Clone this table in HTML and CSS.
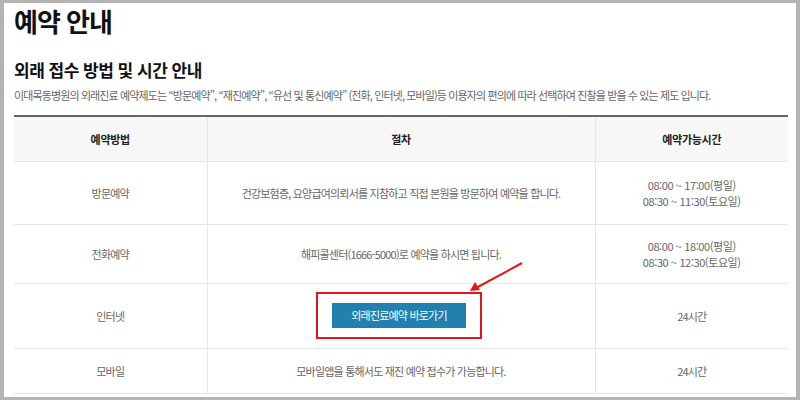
FILE: index.html
```html
<!DOCTYPE html>
<html lang="ko">
<head>
<meta charset="utf-8">
<link rel="stylesheet" href="styles.css">
</head>
<body>
<div class="frame">
  <div class="page">
    <h1 class="title">예약 안내</h1>
    <h2 class="subtitle">외래 접수 방법 및 시간 안내</h2>
    <p class="desc">이대목동병원의 외래진료 예약제도는 “방문예약”, “재진예약”, “유선 및 통신예약” (전화, 인터넷, 모바일)등 이용자의 편의에 따라 선택하여 진찰을 받을 수 있는 제도 입니다.</p>
    <table class="rtable">
      <colgroup>
        <col class="c1"><col class="c2"><col class="c3">
      </colgroup>
      <thead>
        <tr class="head"><th>예약방법</th><th>절차</th><th>예약가능시간</th></tr>
      </thead>
      <tbody>
        <tr class="r1">
          <td>방문예약</td>
          <td>건강보험증, 요양급여의뢰서를 지참하고 직접 본원을 방문하여 예약을 합니다.</td>
          <td class="time">08:00 ~ 17:00(평일)<br>08:30 ~ 11:30(토요일)</td>
        </tr>
        <tr class="r2">
          <td>전화예약</td>
          <td>해피콜센터(1666-5000)로 예약을 하시면 됩니다.</td>
          <td class="time">08:00 ~ 18:00(평일)<br>08:30 ~ 12:30(토요일)</td>
        </tr>
        <tr class="r3">
          <td>인터넷</td>
          <td>
            <div class="mark">
              <a class="btn">외래진료예약 바로가기</a>
              <svg class="arrow" width="70" height="40" viewBox="0 0 70 40">
                <line x1="60" y1="6" x2="14" y2="31" stroke="#e01818" stroke-width="2"/>
                <polygon points="8,34 13,25 18,33" fill="#e01818"/>
              </svg>
            </div>
          </td>
          <td>24시간</td>
        </tr>
        <tr class="r4">
          <td>모바일</td>
          <td>모바일앱을 통해서도 재진 예약 접수가 가능합니다.</td>
          <td>24시간</td>
        </tr>
      </tbody>
    </table>
  </div>
</div>
</body>
</html>
```

FILE: styles.css
```css
html, body {
  margin: 0;
  padding: 0;
}
body {
  width: 800px;
  height: 400px;
  background: #b4b4b4;
  font-family: "Noto Sans CJK KR", "Noto Sans", sans-serif;
  overflow: hidden;
}
.frame {
  padding: 3px 4px 3px 4px;
  box-sizing: border-box;
  height: 400px;
}
.page {
  background: #fff;
  height: 394px;
  padding: 0 0 0 10px;
  overflow: hidden;
}
.title {
  margin: 0;
  font-size: 26px;
  line-height: 36px;
  font-weight: 700;
  color: #111;
  letter-spacing: -1px;
}
.subtitle {
  margin: 19px 0 0 0;
  font-size: 17px;
  line-height: 24px;
  font-weight: 700;
  color: #111;
  letter-spacing: -0.5px;
}
.desc {
  margin: 5px 0 0 0;
  font-size: 11px;
  line-height: 16px;
  color: #666;
  letter-spacing: -0.88px;
}
.rtable {
  margin-top: 12px;
  width: 774px;
  border-collapse: collapse;
  table-layout: fixed;
  border-top: 2px solid #666;
}
.c1 { width: 193px; }
.c2 { width: 388px; }
.c3 { width: 193px; }
.rtable th, .rtable td {
  text-align: center;
  vertical-align: middle;
  font-size: 11px;
  line-height: 16px;
  padding: 0;
  border-bottom: 1px solid #e6e6e6;
  border-left: 1px solid #e6e6e6;
}
.rtable th:first-child, .rtable td:first-child {
  border-left: none;
}
.rtable th {
  background: #f7f7f7;
  color: #222;
  font-weight: 700;
  letter-spacing: -0.3px;
}
.rtable td {
  color: #666;
  letter-spacing: -0.8px;
}
.rtable td.time {
  letter-spacing: -0.4px;
}
.head { height: 45px; }
.r1 { height: 63px; }
.r2 { height: 59px; }
.r3 { height: 65px; }
.r4 { height: 45px; }
.mark {
  position: relative;
  display: inline-flex;
  border: 2px solid #e01818;
  padding: 9px 14px;
  vertical-align: middle;
  margin-right: 4px;
}
.btn {
  display: block;
  width: 134px;
  height: 25px;
  line-height: 25px;
  background: #2180ad;
  color: #fff;
  font-size: 11px;
  text-align: center;
  letter-spacing: -0.8px;
}
.arrow {
  position: absolute;
  left: 144px;
  top: -37px;
}
```
